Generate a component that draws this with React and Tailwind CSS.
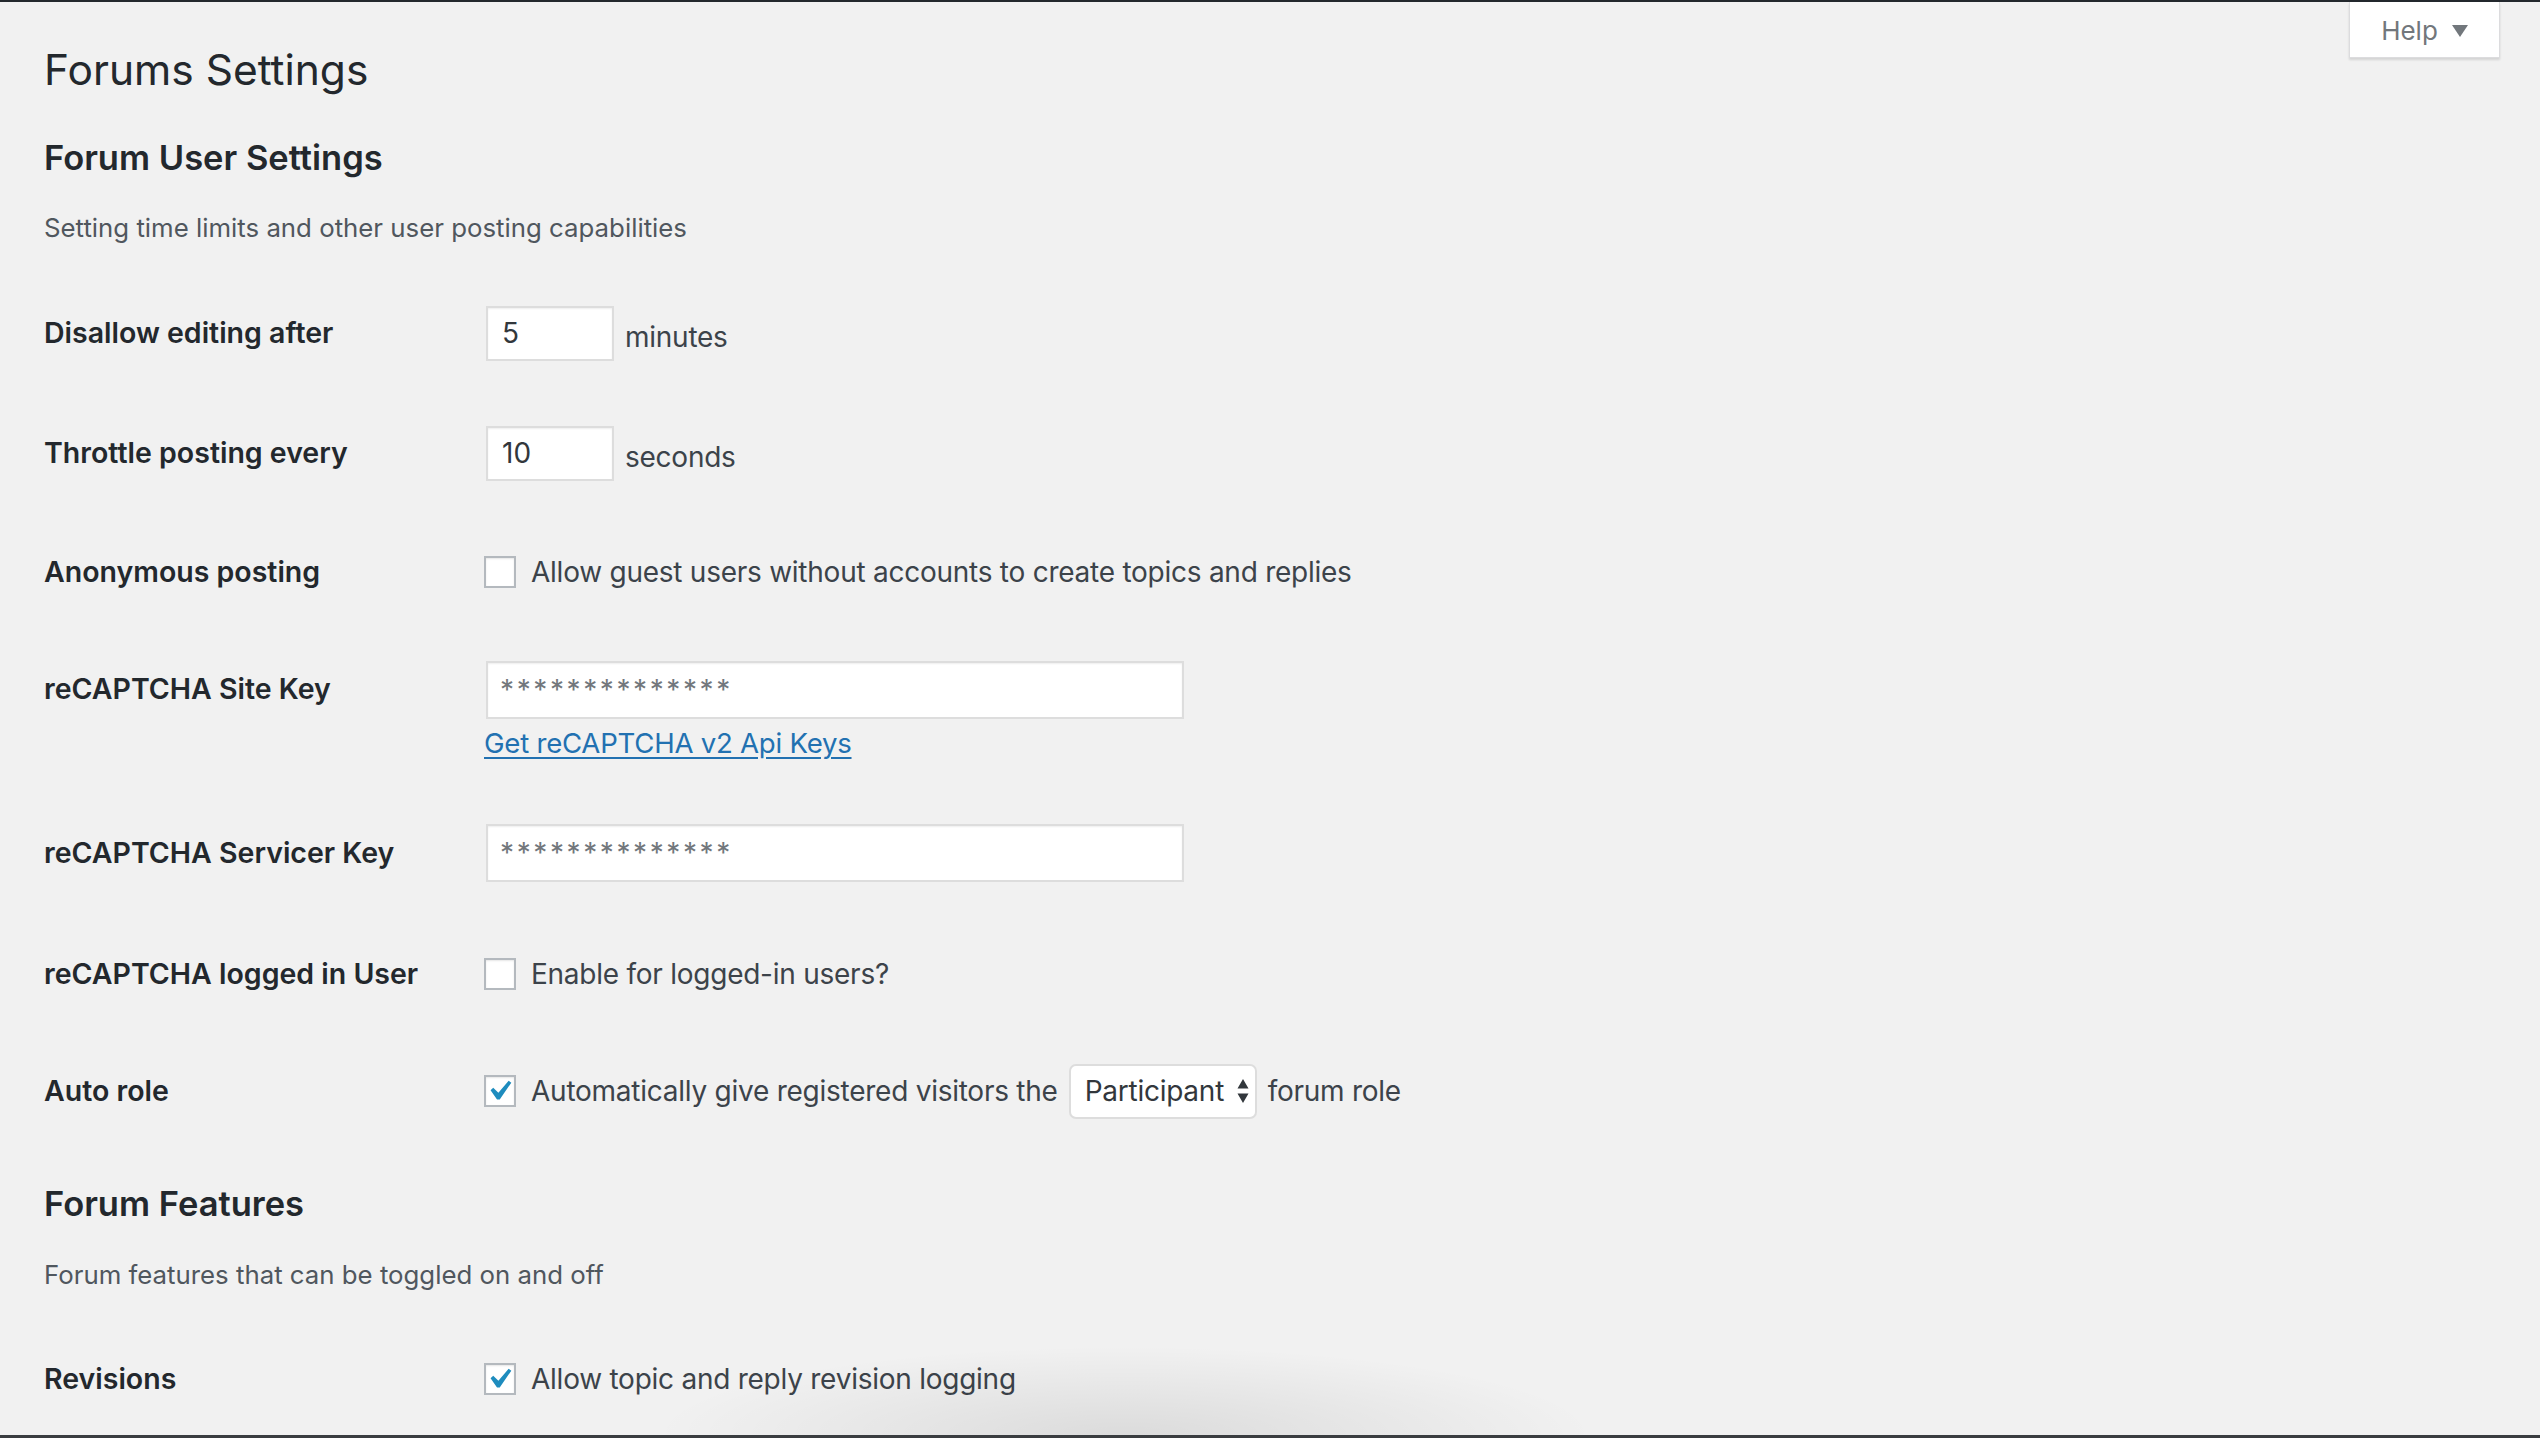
import React from "react";

const font = "font-['Inter','Liberation_Sans',sans-serif]";
const body = "text-[28px] text-[#3c434a] tracking-[-0.25px]";

function Checkbox({ checked }) {
  return (
    <span className="w-[32px] h-[32px] shrink-0 border-2 border-[#b4b9be] bg-white shadow-[inset_0_1px_2px_rgba(0,0,0,0.1)] flex items-center justify-center">
      {checked && (
        <svg viewBox="0 0 20 20" className="w-[40px] h-[40px] shrink-0 -ml-[3px]">
          <path d="M14.83 4.89l1.34.94-5.81 8.38H9.02L5.78 9.67l1.34-1.25 2.57 2.4z" fill="#1e8cbe" />
        </svg>
      )}
    </span>
  );
}

function Field({ value, wide }) {
  return (
    <div
      className={
        wide
          ? "ml-[2px] w-[698px] h-[58px] border-2 border-[#dddddd] bg-white shadow-[inset_0_1px_2px_rgba(0,0,0,0.07)] flex items-center pl-[12px] text-[28px] text-[#72777c] tracking-[2.6px]"
          : "ml-[2px] w-[128px] h-[55px] border-2 border-[#dddddd] bg-white shadow-[inset_0_1px_2px_rgba(0,0,0,0.07)] flex items-center pl-[14px] text-[28px] text-[#32373c]"
      }
    >
      {value}
    </div>
  );
}

function Row({ label, children, className }) {
  return (
    <div className={"flex " + className}>
      <div className="w-[440px] shrink-0 h-[56px] flex items-center text-[28.5px] font-semibold text-[#23282d]">
        {label}
      </div>
      {children}
    </div>
  );
}

export default function App() {
  return (
    <div className={"relative h-screen flex flex-col bg-[#f1f1f1] overflow-hidden " + font}>
      <div className="h-[2px] bg-[#23282d] shrink-0" />

      <div className="absolute top-[2px] right-[40px] w-[151px] h-[56px] bg-white border border-t-0 border-[#dcdcde] shadow-[0_2px_2px_rgba(0,0,0,0.12)] flex items-center justify-center gap-[14px] pt-[2px]">
        <span className="text-[26px] text-[#72777c]">Help</span>
        <svg viewBox="0 0 16 12" className="w-[16px] h-[12px]">
          <path d="M0 0h16L8 12z" fill="#72777c" />
        </svg>
      </div>

      <div className="flex-1 px-[44px] flex flex-col">
        <h1 className="mt-[40px] h-[56px] flex items-center text-[42.5px] font-normal text-[#23282d]">
          Forums Settings
        </h1>
        <h2 className="mt-[38px] h-[44px] flex items-center text-[34.5px] font-semibold text-[#23282d]">
          Forum User Settings
        </h2>
        <p className="mt-[30px] h-[36px] flex items-center text-[25.8px] text-[#50575e]">
          Setting time limits and other user posting capabilities
        </p>

        <Row label="Disallow editing after" className="mt-[59px] items-center">
          <div className="flex items-center gap-[11px]">
            <Field value="5" />
            <span className={body + " mt-[8px]"}>minutes</span>
          </div>
        </Row>

        <Row label="Throttle posting every" className="mt-[64px] items-center">
          <div className="flex items-center gap-[11px]">
            <Field value="10" />
            <span className={body + " mt-[8px]"}>seconds</span>
          </div>
        </Row>

        <Row label="Anonymous posting" className="mt-[63px] items-center">
          <div className="flex items-center gap-[15px]">
            <Checkbox />
            <span className={body}>
              Allow guest users without accounts to create topics and replies
            </span>
          </div>
        </Row>

        <Row label="reCAPTCHA Site Key" className="mt-[61px] items-start">
          <div className="flex flex-col">
            <Field value="**************" wide />
            <a href="#" className="mt-[9px] h-[32px] flex items-center text-[27.6px] tracking-[-0.25px] text-[#2271b1] underline underline-offset-[4px]">
              Get reCAPTCHA v2 Api Keys
            </a>
          </div>
        </Row>

        <Row label="reCAPTCHA Servicer Key" className="mt-[64px] items-center">
          <Field value="**************" wide />
        </Row>

        <Row label="reCAPTCHA logged in User" className="mt-[64px] items-center">
          <div className="flex items-center gap-[15px]">
            <Checkbox />
            <span className={body}>Enable for logged-in users?</span>
          </div>
        </Row>

        <Row label="Auto role" className="mt-[61px] items-center">
          <div className="flex items-center gap-[11px]">
            <Checkbox checked />
            <span className={body + " ml-[4px]"}>
              Automatically give registered visitors the
            </span>
            <div className="w-[188px] h-[55px] rounded-[7px] border-2 border-[#dddddd] bg-white flex items-center justify-between pl-[14px] pr-[6px] text-[28px] tracking-[-0.25px] text-[#32373c]">
              <span>Participant</span>
              <svg viewBox="0 0 12 26" className="w-[12px] h-[26px]">
                <path d="M6 1L11.5 10.5H0.5z M6 25L0.5 15.5h11z" fill="#32373c" />
              </svg>
            </div>
            <span className={body}>forum role</span>
          </div>
        </Row>

        <h2 className="mt-[63px] h-[44px] flex items-center text-[34.5px] font-semibold text-[#23282d]">
          Forum Features
        </h2>
        <p className="mt-[31px] h-[36px] flex items-center text-[25.8px] text-[#50575e]">
          Forum features that can be toggled on and off
        </p>

        <Row label="Revisions" className="mt-[58px] items-center">
          <div className="flex items-center gap-[15px]">
            <Checkbox checked />
            <span className={body}>Allow topic and reply revision logging</span>
          </div>
        </Row>
      </div>

      <div className="absolute bottom-[3px] left-[650px] w-[950px] h-[90px] bg-[radial-gradient(ellipse_at_bottom,rgba(0,0,0,0.09),transparent_70%)]" />
      <div className="h-[3px] bg-[#3a3d40] shrink-0" />
    </div>
  );
}
